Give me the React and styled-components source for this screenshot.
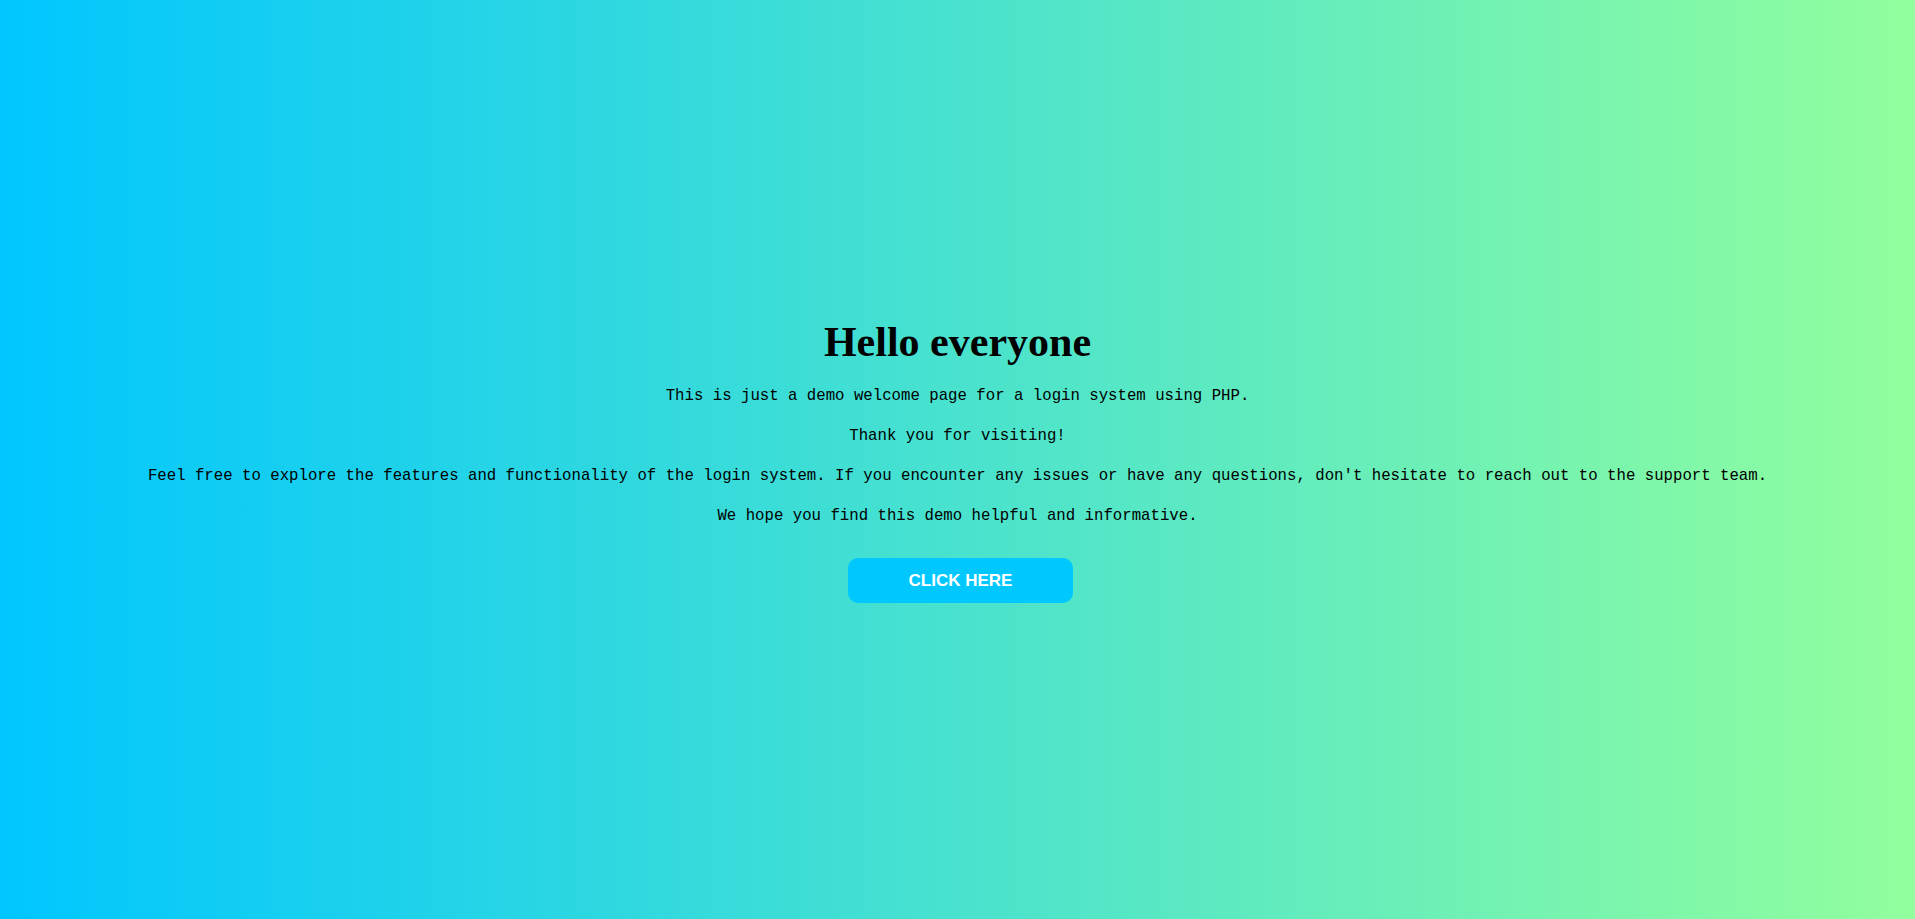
import React from 'react'
import styled, { createGlobalStyle } from 'styled-components'

const GlobalStyle = createGlobalStyle`
  html, body {
    margin: 0;
    padding: 0;
  }
  body {
    font-family: "Liberation Mono", "DejaVu Sans Mono", monospace;
  }
`

const Page = styled.div`
  min-height: 100vh;
  box-sizing: border-box;
  padding-top: 2px;
  display: flex;
  flex-direction: column;
  align-items: center;
  justify-content: center;
  background: linear-gradient(to right, #00c6ff, #92fe9d);
  text-align: center;
  color: #000;
`

const Title = styled.h1`
  font-family: "Liberation Serif", "Times New Roman", serif;
  font-weight: 700;
  font-size: 42px;
  line-height: 48px;
  margin: 0 0 18px;
`

const Text = styled.p`
  font-size: 15.7px;
  line-height: 24px;
  margin: 0 0 16px;
  white-space: nowrap;
`

const Button = styled.button`
  margin: 14px 0 0 6px;
  width: 225px;
  padding: 12px 0;
  border: none;
  border-radius: 10px;
  background-color: #00c8ff;
  color: #fff;
  font-family: "Liberation Sans", Arial, sans-serif;
  font-weight: 700;
  font-size: 17px;
  line-height: 21px;
  cursor: pointer;
`

const App = () => {
  return (
    <>
      <GlobalStyle />
      <Page>
        <Title>Hello everyone</Title>
        <Text>This is just a demo welcome page for a login system using PHP.</Text>
        <Text>Thank you for visiting!</Text>
        <Text>
          Feel free to explore the features and functionality of the login system. If you encounter any issues or have any questions, don't hesitate to reach out to the support team.
        </Text>
        <Text>We hope you find this demo helpful and informative.</Text>
        <Button>CLICK HERE</Button>
      </Page>
    </>
  )
}

export default App
